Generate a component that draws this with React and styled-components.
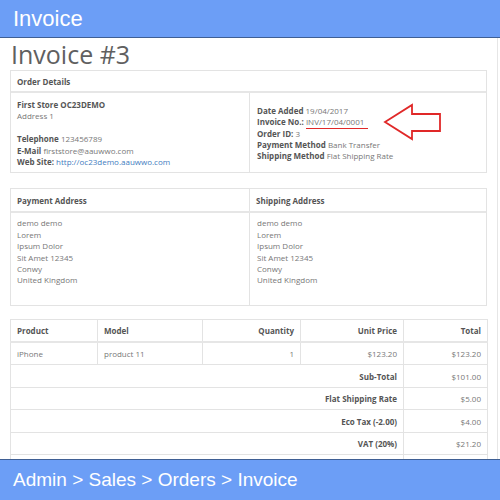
import styled, { createGlobalStyle } from 'styled-components';

const GlobalStyle = createGlobalStyle`
  html, body {
    margin: 0;
    padding: 0;
    background: #ffffff;
  }
  * {
    box-sizing: border-box;
  }
`;

const Page = styled.div`
  width: 500px;
  height: 500px;
  display: flex;
  flex-direction: column;
  overflow: hidden;
  font-family: 'Open Sans', 'DejaVu Sans', sans-serif;
  font-size: 8px;
  color: #777;
`;

const Banner = styled.div`
  flex: none;
  height: ${(p) => p.$h}px;
  background: #6c9ef6;
  color: #ffffff;
  font-family: 'Liberation Sans', Arial, sans-serif;
  font-size: ${(p) => p.$size}px;
  line-height: ${(p) => p.$h - 1}px;
  padding-left: 13px;
  ${(p) => (p.$top ? 'border-bottom' : 'border-top')}: 1px solid #3f5f94;
`;

const Content = styled.div`
  flex: 1;
  overflow: hidden;
  width: 498px;
  border-right: 1px solid #e6e6e6;
  padding: 0 10px;
`;

const Title = styled.h1`
  margin: 0;
  height: 32px;
  font-size: 25px;
  line-height: 32px;
  font-weight: 400;
  color: #606060;
  padding-left: 1px;
`;

const Panel = styled.div`
  position: relative;
  width: 477px;
  border: 1px solid #e3e3e3;
  margin-bottom: ${(p) => p.$gap}px;
`;

const PanelHead = styled.div`
  display: grid;
  grid-template-columns: ${(p) => (p.$split ? '238px 1fr' : '1fr')};
  border-bottom: 2px solid #e6e6e6;
  height: ${(p) => p.$h}px;
`;

const HeadCell = styled.div`
  display: flex;
  align-items: center;
  padding-left: 6px;
  font-weight: 700;
  color: #555;
  & + & {
    border-left: 1px solid #e3e3e3;
    padding-left: 6px;
  }
`;

const PanelBody = styled.div`
  display: grid;
  grid-template-columns: 238px 1fr;
`;

const BodyCell = styled.div`
  display: flex;
  flex-direction: column;
  justify-content: ${(p) => (p.$middle ? 'center' : 'flex-start')};
  padding: ${(p) => p.$pad};
  line-height: 11.4px;
  & + & {
    border-left: 1px solid #e3e3e3;
    padding-left: 7px;
  }
`;

const Line = styled.div`
  min-height: 11.4px;
  white-space: nowrap;
`;

const Label = styled.b`
  font-weight: 700;
  color: #555;
`;

const Link = styled.span`
  color: #3f7cc0;
`;

const Marked = styled.span`
  position: relative;
  &::after {
    content: '';
    position: absolute;
    left: 0;
    right: -4px;
    bottom: -2px;
    height: 1.5px;
    background: #e02828;
  }
`;

const Arrow = styled.svg`
  position: absolute;
  left: 370px;
  top: 30px;
`;

const Table = styled.table`
  width: 477px;
  border-collapse: collapse;
  table-layout: fixed;
  border: 1px solid #e3e3e3;
`;

const Th = styled.th`
  height: 23px;
  padding: 0 6px;
  font-weight: 700;
  color: #555;
  text-align: ${(p) => p.$align || 'left'};
  border: 1px solid #e3e3e3;
  border-bottom: 2px solid #e6e6e6;
`;

const Td = styled.td`
  height: 22.5px;
  padding: 0 6px;
  text-align: ${(p) => p.$align || 'left'};
  font-weight: ${(p) => (p.$bold ? 700 : 400)};
  color: ${(p) => (p.$bold ? '#555' : '#777')};
  border: 1px solid #e3e3e3;
  white-space: nowrap;
`;

const totals = [
  ['Sub-Total', '$101.00'],
  ['Flat Shipping Rate', '$5.00'],
  ['Eco Tax (-2.00)', '$4.00'],
  ['VAT (20%)', '$21.20'],
  ['Total', '$131.20'],
];

const address = ['demo demo', 'Lorem', 'Ipsum Dolor', 'Sit Amet 12345', 'Conwy', 'United Kingdom'];

export default function App() {
  return (
    <Page>
      <GlobalStyle />
      <Banner $top $h={38} $size={22}>Invoice</Banner>
      <Content>
        <Title>Invoice #3</Title>

        <Panel $gap={15}>
          <PanelHead $h={22}>
            <HeadCell>Order Details</HeadCell>
          </PanelHead>
          <PanelBody>
            <BodyCell $middle $pad="6px 6px 5px">
              <Line><Label>First Store OC23DEMO</Label></Line>
              <Line>Address 1</Line>
              <Line />
              <Line><Label>Telephone</Label> 123456789</Line>
              <Line><Label>E-Mail</Label> firststore@aauwwo.com</Line>
              <Line><Label>Web Site:</Label> <Link>http://oc23demo.aauwwo.com</Link></Line>
            </BodyCell>
            <BodyCell $middle $pad="6px 6px 5px">
              <Line><Label>Date Added</Label> 19/04/2017</Line>
              <Line><Label>Invoice No.:</Label> <Marked>INV/17/04/0001</Marked></Line>
              <Line><Label>Order ID:</Label> 3</Line>
              <Line><Label>Payment Method</Label> Bank Transfer</Line>
              <Line><Label>Shipping Method</Label> Flat Shipping Rate</Line>
            </BodyCell>
          </PanelBody>
          <Arrow width="62" height="42" viewBox="0 0 62 42">
            <polygon
              points="4,21 31,4 31,13 59,13 59,30 31,30 31,38"
              fill="none"
              stroke="#e02828"
              strokeWidth="1.8"
              strokeLinejoin="miter"
            />
          </Arrow>
        </Panel>

        <Panel $gap={13}>
          <PanelHead $split $h={24}>
            <HeadCell>Payment Address</HeadCell>
            <HeadCell>Shipping Address</HeadCell>
          </PanelHead>
          <PanelBody>
            <BodyCell $pad="4px 6px 19px">
              {address.map((l) => <Line key={l}>{l}</Line>)}
            </BodyCell>
            <BodyCell $pad="4px 6px 19px">
              {address.map((l) => <Line key={l}>{l}</Line>)}
            </BodyCell>
          </PanelBody>
        </Panel>

        <Table>
          <colgroup>
            <col style={{ width: 87 }} />
            <col style={{ width: 105 }} />
            <col style={{ width: 98 }} />
            <col style={{ width: 103 }} />
            <col style={{ width: 84 }} />
          </colgroup>
          <thead>
            <tr>
              <Th>Product</Th>
              <Th>Model</Th>
              <Th $align="right">Quantity</Th>
              <Th $align="right">Unit Price</Th>
              <Th $align="right">Total</Th>
            </tr>
          </thead>
          <tbody>
            <tr>
              <Td>iPhone</Td>
              <Td>product 11</Td>
              <Td $align="right">1</Td>
              <Td $align="right">$123.20</Td>
              <Td $align="right">$123.20</Td>
            </tr>
            {totals.map(([label, value]) => (
              <tr key={label}>
                <Td colSpan={4} $align="right" $bold>{label}</Td>
                <Td $align="right">{value}</Td>
              </tr>
            ))}
          </tbody>
        </Table>
      </Content>
      <Banner $h={41} $size={19}>Admin &gt; Sales &gt; Orders &gt; Invoice</Banner>
    </Page>
  );
}
